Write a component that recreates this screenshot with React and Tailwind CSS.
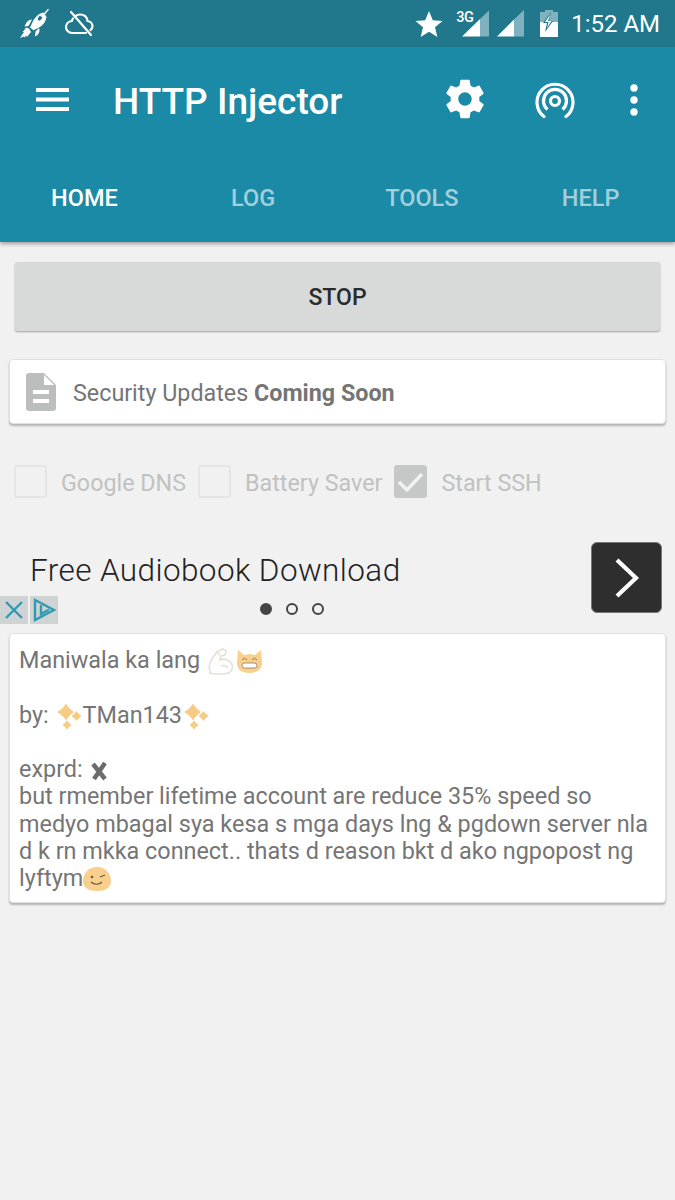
const StatusBar = () => (
  <div className="flex h-[47px] items-center justify-between bg-[#21788c] pl-[18px] pr-[15px]">
    <div className="flex items-center gap-[14px]">
      {/* rocket */}
      <svg width="32" height="32" viewBox="0 0 32 32" fill="white">
        <path d="M31 1.500 27 6.500 25.800 5.500 30 .8z" />
        <path d="M25.500 4.500c-4 .8-8 4-10.500 8.500l-3 6.500 3.500 2.800 6-3c4-2.500 6.500-6 7-10.500zM22 7.500l2.500 2.200c-1 1.500-2 2.500-3.500 3l-1.500-1.500c.5-1.500 1.500-2.700 2.500-3.700z" fillRule="evenodd" />
        <path d="M8.500 14.500c1.500-2 3.500-3 5.500-3l-3.500 6.500-4 .5zM21 20c1 2 .5 5-1.500 7l-2.500 1.500 .5-5z" />
        <path d="M11 20.500l-3-1-2 3-1.500 1.200 1.500.3-4 6 4-1.500 .5 1 2-2 .5 1.500 4-5z" />
      </svg>
      <svg width="30" height="30" viewBox="0 0 30 30" fill="none" stroke="white" strokeWidth="2.200" strokeLinecap="round">
        <path d="M7 3 27 26" />
        <path d="M11.500 7c1.500-1 3-1.500 4.500-1.500 4 0 7 2.500 7.500 6.500 3 .3 5 2.500 5 5 0 1.500-.5 3-2 4" />
        <path d="M9 9.500c-.5.800-1 1.700-1.200 2.500C4.500 12.500 2 15 2 18c0 3.500 2.800 6 6 6h14" />
      </svg>
    </div>
    <div className="flex items-center">
      <svg width="30" height="30" viewBox="0 0 30 30" fill="white" className="mr-[13px]">
        <path d="M15 2 18.800 11.200 28.500 12 21 18.300 23.400 28 15 22.800 6.600 28 9 18.300 1.500 12 11.200 11.200z" />
      </svg>
      <div className="relative mr-[8px] h-[30px] w-[32px]">
        <span className="absolute -left-[1px] top-[1px] text-[14.500px] font-medium leading-[16px] tracking-[-0.5px] text-white">3G</span>
        <svg width="32" height="30" viewBox="0 0 32 30" className="absolute left-0 top-0">
          <path d="M5 27.500 23 10V27.500z" fill="white" />
          <path d="M23 10 32 1.500V27.500H23z" fill="#7fb2be" />
        </svg>
      </div>
      <svg width="27" height="30" viewBox="0 0 27 30" className="mr-[16px]">
        <path d="M0 27.500 17 10.500V27.500z" fill="white" />
        <path d="M17 10.500 27 1V27.500H17z" fill="#7fb2be" />
      </svg>
      <svg width="18" height="30" viewBox="0 0 18 30" className="mr-[13px]">
        <path d="M0 3h5V1h8v2h5v11H0z" fill="#7fb2be" />
        <path d="M0 13h18v15H0z" fill="white" />
        <path d="M11 3 3 14h4l-2 9 8-11H9z" fill="#21788c" />
        <path d="M10.500 5 5 13h3.500l-1.500 6 4.500-7H8z" fill="white" />
      </svg>
      <span className="text-[24px] leading-[30px] text-white">1:52 AM</span>
    </div>
  </div>
);

const Header = () => (
  <div className="relative bg-[#1a8aa6] shadow-[0_2px_4px_rgba(0,0,0,0.35)]">
    <div className="flex h-[108px] items-start pt-[30px]">
      <svg width="33" height="23" viewBox="0 0 33 23" fill="white" className="ml-[36px] mt-[11px]">
        <rect width="33" height="4" />
        <rect y="9.500" width="33" height="4" />
        <rect y="19" width="33" height="4" />
      </svg>
      <span className="ml-[44px] mt-[1px] text-[37px] font-medium leading-[48px] text-white">HTTP Injector</span>
      <div className="ml-auto flex items-center">
        <svg width="46" height="46" viewBox="0 0 24 24" fill="white" className="mt-[-1px]">
          <path d="M19.430 12.980c.04-.32.07-.64.07-.98s-.03-.66-.07-.98l2.110-1.650c.19-.15.24-.42.12-.64l-2-3.460c-.12-.22-.39-.3-.61-.22l-2.490 1c-.52-.4-1.080-.73-1.690-.98l-.38-2.650C14.460 2.180 14.250 2 14 2h-4c-.25 0-.46.18-.49.42l-.38 2.650c-.61.25-1.170.59-1.690.98l-2.490-1c-.23-.09-.49 0-.61.22l-2 3.460c-.13.22-.07.49.12.64l2.110 1.650c-.04.32-.07.65-.07.98s.03.66.07.98l-2.110 1.650c-.19.15-.24.42-.12.64l2 3.460c.12.22.39.3.61.22l2.490-1c.52.4 1.080.73 1.690.98l.38 2.650c.03.24.24.42.49.42h4c.25 0 .46-.18.49-.42l.38-2.650c.61-.25 1.170-.59 1.690-.98l2.490 1c.23.09.49 0 .61-.22l2-3.460c.12-.22.07-.49-.12-.64l-2.110-1.650zM12 15.500c-1.930 0-3.500-1.570-3.500-3.500s1.570-3.500 3.500-3.500 3.500 1.570 3.500 3.500-1.570 3.500-3.500 3.500z" />
        </svg>
        <svg width="40" height="38" viewBox="0 0 40 38" fill="none" stroke="white" strokeWidth="3.200" className="ml-[47px]">
          <circle cx="20" cy="20" r="4.500" />
          <path d="M12.500 28.500a11.500 11.500 0 1 1 15 0" />
          <path d="M9 35.500a18 18 0 1 1 22 0" strokeLinecap="round" />
        </svg>
        <svg width="8" height="32" viewBox="0 0 8 32" fill="white" className="ml-[55px] mr-[37px]">
          <circle cx="4" cy="4" r="3.700" />
          <circle cx="4" cy="16" r="3.700" />
          <circle cx="4" cy="28" r="3.700" />
        </svg>
      </div>
    </div>
    <div className="grid h-[87px] grid-cols-4 items-center text-[23.500px] font-medium">
      <span className="text-center text-white">HOME</span>
      <span className="text-center text-white/60">LOG</span>
      <span className="text-center text-white/60">TOOLS</span>
      <span className="text-center text-white/60">HELP</span>
    </div>
  </div>
);

const CheckItem = ({ label, checked }) => (
  <div className="flex items-center">
    <div className={`flex h-[33px] w-[33px] items-center justify-center rounded-[3px] ${checked ? 'bg-[#c6c8c8]' : 'border-[2px] border-[#e4e5e5]'}`}>
      {checked && (
        <svg width="27" height="22" viewBox="0 0 27 22" fill="none" stroke="#f1f1f1" strokeWidth="3.600">
          <path d="M2 11 10 19 25 3" />
        </svg>
      )}
    </div>
    <span className="ml-[14px] pt-[3px] text-[#c0c1c1]">{label}</span>
  </div>
);

const Sparkles = () => (
  <svg width="28" height="28" viewBox="0 0 28 28" fill="#f6cc84" className="-my-[4px] inline-block align-[-3px]">
    <path d="M11 1.500c1.500 3 5 6.500 8 8.500-3 2-6.500 5.500-8 8.500C9.500 15.500 6 12 2 10c4-2 7.500-5.500 9-8.500z" />
    <path d="M21.500 9c1 1.500 3 3.500 5 5-2 1.500-4 3.500-5 5-1-1.500-3-3.500-5-5 2-1.500 4-3.500 5-5z" />
    <path d="M12 18.500c1 1.500 2.500 3 4.500 4.500-2 1.500-3.500 3-4.500 4.500-1-1.500-2.500-3-4.500-4.500 2-1.500 3.500-3 4.500-4.500z" />
  </svg>
);

const Muscle = () => (
  <svg width="26" height="27" viewBox="0 0 26 27" fill="none" stroke="#e6e1d5" strokeWidth="1.600" className="-my-[4px] ml-[2px] inline-block align-[-3px]">
    <path d="M3 25C0 20 1 14 6 8c2-3 5-6 9-7l3 2-1 4-4 1-1 4c2-1 6-1 9 1 3 2 4 5 3 8-1 3-5 5-10 5-4 0-9 0-13-1z" />
    <path d="M13 18c3-1 6 0 7 2M8 3l4 4" />
  </svg>
);

const CatGrin = () => (
  <svg width="27" height="25" viewBox="0 0 27 25" className="-my-[4px] ml-[2px] inline-block align-[-2px]">
    <path d="M2 1l6 5c3-1 8-1 11 0l6-5 1 13c0 7-6 10-12.500 10S1 21 1 14z" fill="#f8cf8d" />
    <path d="M6 11l2.500-2L11 11M16 11l2.500-2 2.500 2" fill="none" stroke="#8a7a5a" strokeWidth="1" />
    <rect x="6" y="14" width="15" height="5" rx="2.500" fill="white" stroke="#8a7a5a" strokeWidth="0.800" />
  </svg>
);

const Wink = () => (
  <svg width="28" height="24" viewBox="0 0 28 24" className="-my-[4px] inline-block align-[-1px]">
    <path d="M14 0c8 0 14 6 14 14 0 7-6 10-14 10S0 21 0 14C0 6 6 0 14 0z" fill="#f8cf8d" />
    <circle cx="9" cy="10" r="1.300" fill="#6b5a3c" />
    <path d="M17 10l5-2M8 15c3 3 8 3 11 0" fill="none" stroke="#6b5a3c" strokeWidth="1.200" />
  </svg>
);

const App = () => (
  <div className="min-h-[1200px] bg-[#f1f1f1] font-['Roboto',sans-serif]">
    <StatusBar />
    <Header />

    <div className="px-[15px] pt-[20px]">
      <div className="flex h-[69px] items-center justify-center rounded-[3px] bg-[#d8d9d9] pt-[3px] text-[23px] font-medium text-[#2b2b2b] shadow-[0_1px_2px_rgba(0,0,0,0.35)]">
        STOP
      </div>
    </div>

    <div className="mx-[9px] mt-[28px] flex h-[65px] items-center rounded-[4px] border border-[#e0e0e0] bg-white pl-[16px] text-[23.300px] text-[#757575] shadow-[0_2px_2px_rgba(0,0,0,0.25)]">
      <svg width="30" height="38" viewBox="0 0 30 38" fill="#bcbebe">
        <path d="M3 0h15l12 12v23c0 2-1 3-3 3H3c-2 0-3-1-3-3V3c0-2 1-3 3-3z" />
        <path d="M18 2v10h10z" fill="white" />
        <path d="M7 17h16v4H7zM7 26h16v4H7z" fill="white" />
      </svg>
      <span className="ml-[17px] pt-[3px]">Security Updates <b className="font-bold">Coming Soon</b></span>
    </div>

    <div className="ml-[14px] mt-[41px] flex h-[33px] gap-[12px] text-[23.300px]">
      <CheckItem label="Google DNS" />
      <CheckItem label="Battery Saver" />
      <CheckItem label="Start SSH" checked />
    </div>

    <div className="relative mt-[44px] h-[92px]">
      <span className="absolute left-[30px] top-[9px] text-[31.500px] font-light leading-[40px] tracking-[0.4px] text-[#222]">
        Free Audiobook Download
      </span>
      <div className="absolute left-[591px] top-0 flex h-[71px] w-[71px] items-center justify-center rounded-[6px] border border-[#777] bg-[#2e2e2e]">
        <svg width="26" height="40" viewBox="0 0 26 40" fill="none" stroke="white" strokeWidth="4.200">
          <path d="M3 2 22 20 3 38" />
        </svg>
      </div>
      <div className="absolute left-[260px] top-[61px] flex gap-[14px]">
        <span className="h-[12px] w-[12px] rounded-full border-[2px] border-[#444] bg-[#444]" />
        <span className="h-[12px] w-[12px] rounded-full border-[2px] border-[#444]" />
        <span className="h-[12px] w-[12px] rounded-full border-[2px] border-[#444]" />
      </div>
      <div className="absolute left-0 top-[54px] flex gap-[2px]">
        <div className="flex h-[28px] w-[28px] items-center justify-center bg-[#d0d3d3]">
          <svg width="22" height="22" viewBox="0 0 22 22" stroke="#2e9bb3" strokeWidth="2.400" fill="none">
            <path d="M3 3l16 16M19 3 3 19" />
          </svg>
        </div>
        <div className="flex h-[28px] w-[28px] items-center justify-center bg-[#d0d3d3]">
          <svg width="24" height="24" viewBox="0 0 24 24" stroke="#2e9bb3" strokeWidth="2.400" fill="none">
            <path d="M3 2v20L22 12zM9 7v9l8-4.500" />
          </svg>
        </div>
      </div>
    </div>

    <div className="mx-[9px] mt-[-1px] rounded-[4px] border border-[#e0e0e0] bg-white px-[9px] pb-[10px] pt-[13px] text-[23.400px] leading-[27.250px] text-[#757575] shadow-[0_2px_2px_rgba(0,0,0,0.25)]">
      <div>Maniwala ka lang <Muscle /><CatGrin /></div>
      <div className="h-[27.250px]" />
      <div>by: <Sparkles />TMan143<Sparkles /></div>
      <div className="h-[27.250px]" />
      <div>
        exprd:{' '}
        <svg width="20" height="20" viewBox="0 0 20 20" stroke="#6b6b6b" strokeWidth="4.500" className="inline-block align-[-4px]">
          <path d="M4 3l12 15M16 2 5 18" />
        </svg>
      </div>
      <div>
        but rmember lifetime account are reduce 35% speed so medyo mbagal sya kesa s mga days lng &amp; pgdown server nla d k rn mkka connect.. thats d reason bkt d ako ngpopost ng lyftym<Wink />
      </div>
    </div>
  </div>
);

export default App;
